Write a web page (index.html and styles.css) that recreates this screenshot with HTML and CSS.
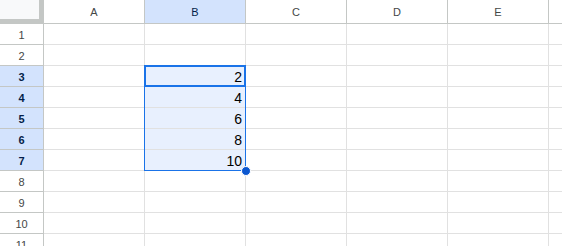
FILE: index.html
```html
<!DOCTYPE html>
<html>
<head>
<meta charset="utf-8">
<link rel="stylesheet" href="styles.css">
</head>
<body>
<div class="sheet">
  <div class="grid">
    <div class="corner"></div>
    <div class="ch">A</div><div class="ch sel">B</div><div class="ch">C</div><div class="ch">D</div><div class="ch">E</div><div class="ch"></div>

    <div class="rh">1</div><div class="c"></div><div class="c"></div><div class="c"></div><div class="c"></div><div class="c"></div><div class="c"></div>
    <div class="rh">2</div><div class="c"></div><div class="c"></div><div class="c"></div><div class="c"></div><div class="c"></div><div class="c"></div>
    <div class="rh sel">3</div><div class="c"></div><div class="c num in">2</div><div class="c"></div><div class="c"></div><div class="c"></div><div class="c"></div>
    <div class="rh sel">4</div><div class="c"></div><div class="c num in">4</div><div class="c"></div><div class="c"></div><div class="c"></div><div class="c"></div>
    <div class="rh sel">5</div><div class="c"></div><div class="c num in">6</div><div class="c"></div><div class="c"></div><div class="c"></div><div class="c"></div>
    <div class="rh sel">6</div><div class="c"></div><div class="c num in">8</div><div class="c"></div><div class="c"></div><div class="c"></div><div class="c"></div>
    <div class="rh sel">7</div><div class="c"></div><div class="c num in">10</div><div class="c"></div><div class="c"></div><div class="c"></div><div class="c"></div>
    <div class="rh">8</div><div class="c"></div><div class="c"></div><div class="c"></div><div class="c"></div><div class="c"></div><div class="c"></div>
    <div class="rh">9</div><div class="c"></div><div class="c"></div><div class="c"></div><div class="c"></div><div class="c"></div><div class="c"></div>
    <div class="rh">10</div><div class="c"></div><div class="c"></div><div class="c"></div><div class="c"></div><div class="c"></div><div class="c"></div>
    <div class="rh">11</div><div class="c"></div><div class="c"></div><div class="c"></div><div class="c"></div><div class="c"></div><div class="c"></div>
  </div>
  <div class="range"></div>
  <div class="active"></div>
  <div class="handle"></div>
</div>
</body>
</html>
```
FILE: styles.css
```css
html, body {
  margin: 0;
  padding: 0;
  background: #fff;
  overflow: hidden;
}
.sheet {
  position: relative;
  width: 562px;
  height: 246px;
  overflow: hidden;
  font-family: "Liberation Sans", Arial, sans-serif;
}
.grid {
  display: grid;
  grid-template-columns: 44px repeat(6, 101px);
  grid-template-rows: 24px repeat(11, 21px);
}
.grid > div {
  border-right: 1px solid #e1e1e1;
  border-bottom: 1px solid #e1e1e1;
  box-sizing: border-box;
}
.grid > .corner {
  background: #f8f9fa;
  box-shadow: inset -4px -4px 0 #c4c7c5;
  border-color: #c4c7c5;
}
.grid > .ch {
  background: #fff;
  border-right-color: #c4c7c5;
  border-bottom-color: #c4c7c5;
  color: #444746;
  font-size: 11px;
  display: flex;
  align-items: center;
  justify-content: center;
  padding-top: 1px;
}
.grid > .rh {
  background: #fff;
  border-right-color: #c4c7c5;
  border-bottom-color: #c4c7c5;
  color: #444746;
  font-size: 11px;
  display: flex;
  align-items: center;
  justify-content: center;
  padding-top: 1px;
}
.grid > .sel {
  background: #d3e3fd;
  font-weight: bold;
  color: #041e49;
}
.grid > .ch.sel {
  font-weight: normal;
}
.grid > .in {
  background: #e8f0fe;
}
.num {
  font-size: 14px;
  color: #000;
  text-align: right;
  padding-right: 3px;
  line-height: 23px;
}
.range {
  position: absolute;
  left: 144px;
  top: 65px;
  width: 100px;
  height: 104px;
  border: 1px solid #1a73e8;
}
.active {
  position: absolute;
  left: 144px;
  top: 65px;
  width: 98px;
  height: 18px;
  border: 2px solid #1a73e8;
}
.handle {
  position: absolute;
  left: 241px;
  top: 166px;
  width: 8px;
  height: 8px;
  border-radius: 50%;
  background: #0b57d0;
  border: 1px solid #fff;
}
```
